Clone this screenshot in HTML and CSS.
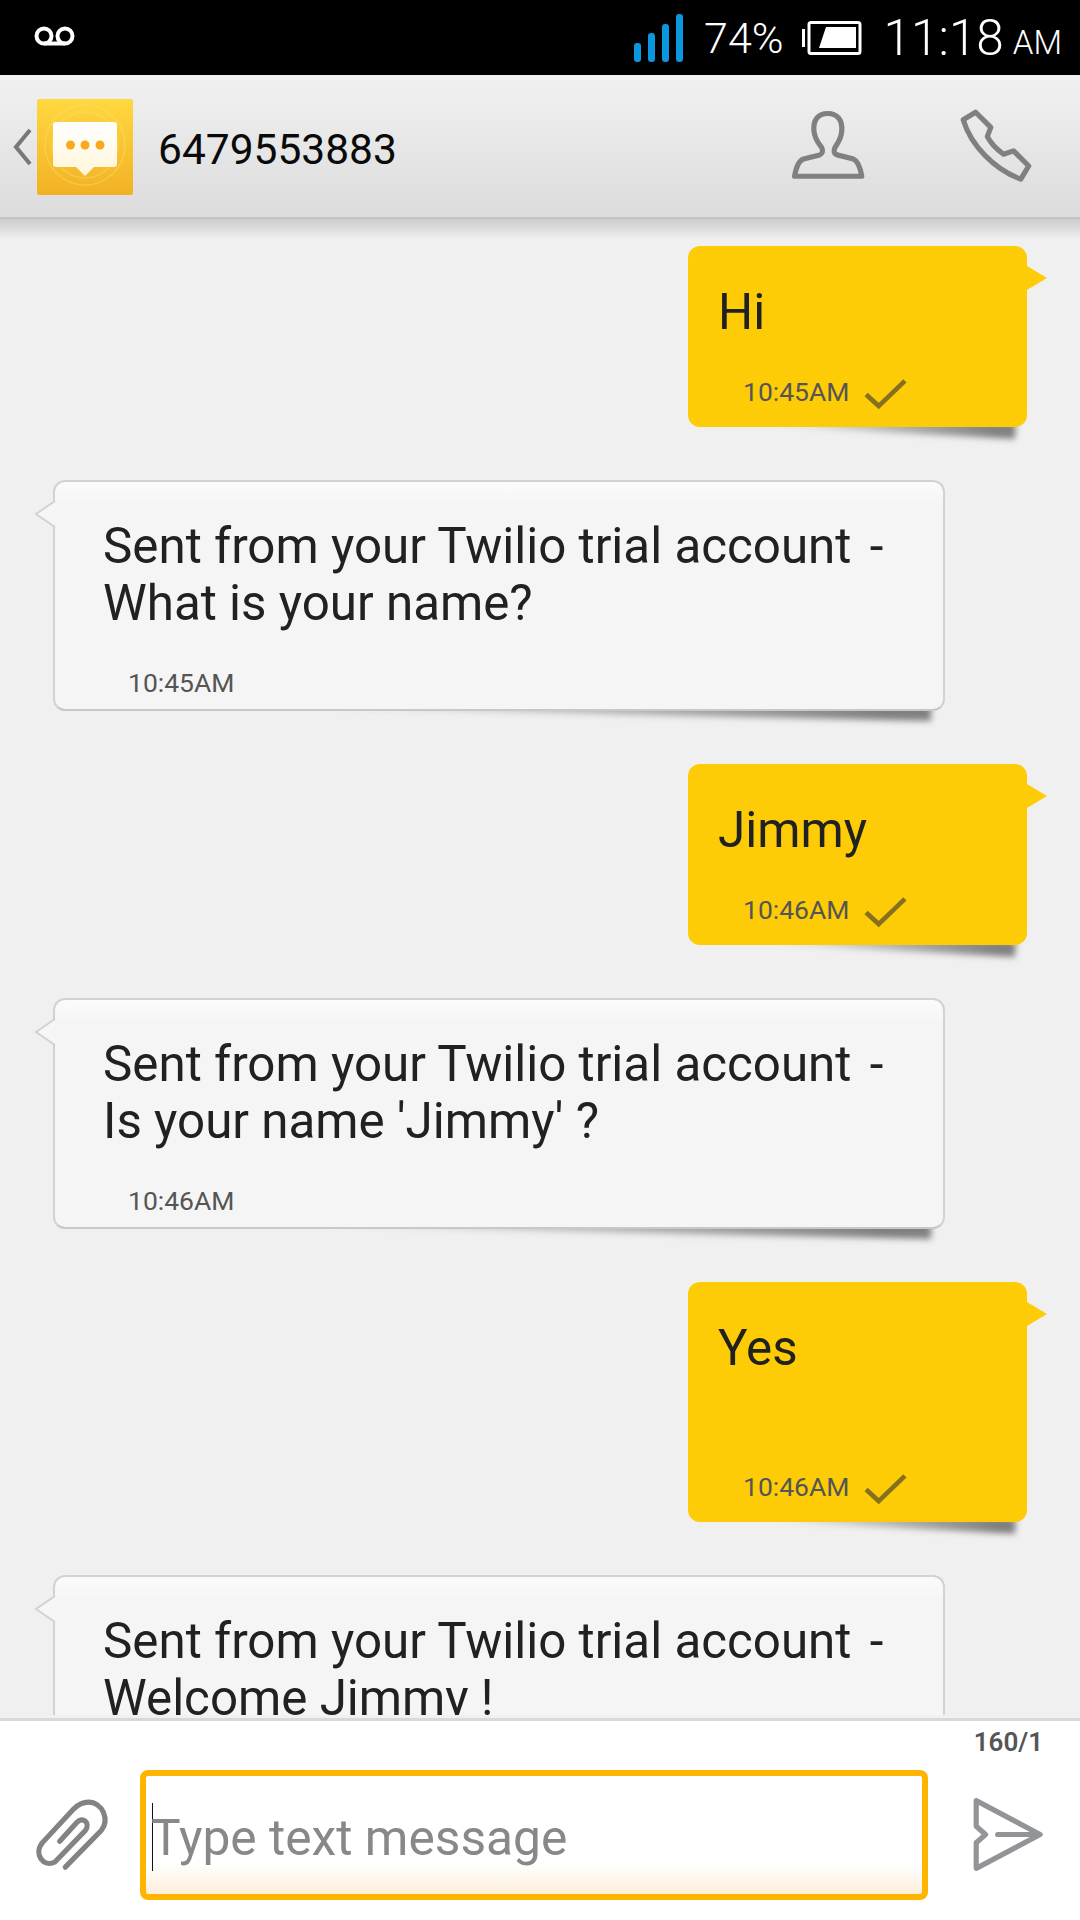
FILE: index.html
```html
<!DOCTYPE html>
<html lang="en">
<head>
<meta charset="utf-8">
<title>6479553883</title>
<link rel="stylesheet" href="styles.css">
</head>
<body>
<div class="phone">
  <div class="status">
    <svg class="vm" viewBox="0 0 41 20"><circle cx="10" cy="10" r="7.5"/><circle cx="31" cy="10" r="7.5"/><path d="M10 17.5h21"/></svg>
    <div class="status-right">
      <div class="signal"><i class="b1"></i><i class="b2"></i><i class="b3"></i><i class="b4"></i></div>
      <span class="pct">74%</span>
      <svg class="battery" viewBox="0 0 60 34"><rect class="nub" x="0" y="8" width="3" height="18"/><rect class="shell" x="7" y="1.5" width="51" height="31" rx="2"/><path class="level" d="M17 27 L24 6 H54 V27 Z"/></svg>
      <span class="clock">11:18</span><span class="ampm">AM</span>
    </div>
  </div>
  <header class="bar">
    <svg class="chev" viewBox="0 0 20 38"><path d="M17 2 L3 19 L17 36"/></svg>
    <svg class="logo" viewBox="0 0 96 96">
      <defs><linearGradient id="lg" x1="0" y1="0" x2="0" y2="1"><stop offset="0" stop-color="#ffd83f"/><stop offset="1" stop-color="#f2b125"/></linearGradient>
      <linearGradient id="lw" x1="0" y1="0" x2="0" y2="1"><stop offset="0" stop-color="#ffffff"/><stop offset="1" stop-color="#fff6d8"/></linearGradient></defs>
      <rect width="96" height="96" rx="2" fill="url(#lg)"/>
      <g class="rings"><circle cx="48" cy="46" r="40"/><circle cx="48" cy="46" r="33"/></g>
      <path d="M19 23h58a3 3 0 0 1 3 3v39a3 3 0 0 1-3 3H57l-9 9-9-9H19a3 3 0 0 1-3-3V26a3 3 0 0 1 3-3z" fill="url(#lw)"/>
      <circle class="dot" cx="33.500" cy="46" r="4.500"/><circle class="dot" cx="48" cy="46" r="4.500"/><circle class="dot" cx="63" cy="46" r="4.500"/>
    </svg>
    <h1 class="num">6479553883</h1>
    <svg class="person" viewBox="720 325 232 210"><path d="M835 341 C865 341 878 362 876 390 C875 415 862 430 856 440 C852 450 853 458 862 461 L910 473 C922 478 930 500 934 523 H739 C743 500 750 478 765 473 L812 461 C820 458 822 450 818 440 C810 430 797 415 795 390 C793 362 805 341 835 341 Z"/></svg>
    <svg class="call" viewBox="1210 325 230 230"><path d="M1228 365 L1264 343 L1308 387 L1298 413 C1308 435 1325 450 1345 465 L1374 455 L1418 499 L1395 537 C1320 510 1250 440 1228 365 Z"/></svg>
  </header>
  <main class="thread">
    <article class="msg out">
      <svg class="tail" viewBox="0 0 20 24"><path d="M0 0 L20 12 L0 24 Z"/></svg>
      <p class="text">Hi</p>
      <div class="meta"><span class="time">10:45AM</span><svg class="tick" viewBox="0 0 41 30"><path d="M2 16 L14 27 L39 3"/></svg></div>
    </article>
    <article class="msg in">
      <svg class="tail" viewBox="0 0 22 28"><path d="M21 1 L2 14 L21 27"/></svg>
      <p class="text">Sent from your Twilio trial account <span class="dash">-</span><br>What is your name?</p>
      <div class="meta"><span class="time">10:45AM</span></div>
    </article>
    <article class="msg out">
      <svg class="tail" viewBox="0 0 20 24"><path d="M0 0 L20 12 L0 24 Z"/></svg>
      <p class="text">Jimmy</p>
      <div class="meta"><span class="time">10:46AM</span><svg class="tick" viewBox="0 0 41 30"><path d="M2 16 L14 27 L39 3"/></svg></div>
    </article>
    <article class="msg in">
      <svg class="tail" viewBox="0 0 22 28"><path d="M21 1 L2 14 L21 27"/></svg>
      <p class="text">Sent from your Twilio trial account <span class="dash">-</span><br>Is your name 'Jimmy' ?</p>
      <div class="meta"><span class="time">10:46AM</span></div>
    </article>
    <article class="msg out tall">
      <svg class="tail" viewBox="0 0 20 24"><path d="M0 0 L20 12 L0 24 Z"/></svg>
      <p class="text">Yes</p>
      <div class="meta"><span class="time">10:46AM</span><svg class="tick" viewBox="0 0 41 30"><path d="M2 16 L14 27 L39 3"/></svg></div>
    </article>
    <article class="msg in">
      <svg class="tail" viewBox="0 0 22 28"><path d="M21 1 L2 14 L21 27"/></svg>
      <p class="text">Sent from your Twilio trial account <span class="dash">-</span><br>Welcome Jimmy !</p>
      <div class="meta"><span class="time">10:46AM</span></div>
    </article>
  </main>
  <footer class="composer">
    <div class="count">160/1</div>
    <div class="row">
      <svg class="clip" viewBox="95 350 225 220"><path d="M188 553 L292 447 C318 415 295 365 255 365 C238 365 225 372 212 385 L122 482 C95 515 125 555 158 538 L246 447 C262 425 238 405 222 423 L172 478"/></svg>
      <div class="field"><span class="caret"></span><span class="hint">Type text message</span></div>
      <svg class="send" viewBox="1250 355 220 225"><path d="M1268 368 L1453 466 L1268 564 V490 L1295 466 L1268 442 Z M1330 466 H1440"/></svg>
    </div>
  </footer>
</div>
</body>
</html>
```

FILE: styles.css
```css
* { box-sizing: border-box; }
html, body { margin: 0; padding: 0; }
body { width: 1080px; height: 1920px; overflow: hidden; font-family: Roboto, "Liberation Sans", sans-serif; }
.phone { width: 1080px; height: 1920px; display: flex; flex-direction: column; background: #f0f0f0; }

.status { flex: 0 0 75px; background: #000; color: #fff; display: flex; align-items: center; justify-content: space-between; padding: 0 18px 0 34px; }
.vm { width: 41px; height: 20px; margin-top: -4px; fill: none; stroke: #fff; stroke-width: 4; }
.status-right { display: flex; align-items: center; height: 75px; }
.signal { display: flex; align-items: flex-end; gap: 7px; height: 48px; margin-right: 21px; }
.signal i { display: block; width: 7px; border-radius: 3px; background: #0a97de; }
.signal .b1 { height: 19px; }
.signal .b2 { height: 29px; }
.signal .b3 { height: 38px; }
.signal .b4 { height: 48px; }
.pct { font-size: 43px; font-weight: 300; line-height: 75px; padding-top: 2px; margin-right: 18px; }
.battery { width: 60px; height: 34px; margin-right: 22px; }
.nub, .level { fill: #fff; }
.shell { fill: none; stroke: #fff; stroke-width: 3; }
.clock { font-size: 49.500px; font-weight: 300; line-height: 75px; padding-top: 2px; margin-right: 9px; }
.ampm { font-size: 33px; font-weight: 300; line-height: 75px; padding-top: 10px; }

.bar { flex: 0 0 144px; display: flex; align-items: center; position: relative; z-index: 2; padding-left: 13px; background: linear-gradient(#f1f1f1, #dcdcdc); border-bottom: 2px solid #c4c4c4; }
.chev { width: 20px; height: 38px; fill: none; stroke: #777; stroke-width: 4; margin-top: 1px; }
.logo { width: 96px; height: 96px; margin-left: 4px; margin-top: 2px; }
.rings { fill: none; stroke: #ffe27a; stroke-opacity: .35; stroke-width: 1.500; }
.dot { fill: #f9a91a; }
.num { font-size: 42.500px; font-weight: 400; color: #0a0a0a; margin: 8px 0 0 25px; line-height: 1; flex: 1; }
.person { width: 80px; height: 72.400px; stroke: #808080; fill: none; stroke-width: 15; stroke-linejoin: round; margin-right: 89px; margin-top: -4px; }
.call { width: 79.300px; height: 79.300px; stroke: #808080; fill: none; stroke-width: 15; stroke-linejoin: round; margin-right: 44px; }

.thread { flex: 1; min-height: 0; overflow: hidden; isolation: isolate; display: flex; flex-direction: column; gap: 53.500px; padding-top: 27px; background: linear-gradient(#cbcbcb, #f0f0f0) 0 0 / 100% 20px no-repeat #f0f0f0; }
.msg { position: relative; flex: none; display: flex; flex-direction: column; border-radius: 12px; }
.msg::after { content: ""; position: absolute; z-index: -1; right: 12px; bottom: -12px; height: 16px; width: 62%; transform-origin: right bottom; background: linear-gradient(to right, rgba(130,130,130,0), #808080 92%); filter: blur(3px); }
.text { margin: 0; font-size: 49.300px; line-height: 57px; color: #212121; }
.dash { margin-left: 6px; }
.meta { margin-top: auto; display: flex; align-items: center; }
.time { font-size: 26.500px; line-height: 30px; color: #555; }
.tail { position: absolute; }

.out { align-self: flex-end; width: 339px; height: 181px; margin-right: 53px; background: #fdcc07; padding: 38px 0 17px 30px; }
.out::after { width: 72%; transform: rotate(3deg); }
.in::after { width: 70%; transform: rotate(1.200deg); }
.out.tall { height: 240px; }
.out .tail { left: 100%; top: 20px; width: 20px; height: 24px; fill: #fdcc07; }
.out .meta { padding-left: 25px; }
.tick { width: 43px; height: 33px; margin-left: 15px; margin-top: 4px; fill: none; stroke: #84701f; stroke-width: 4.500; }

.in { align-self: flex-start; width: 892px; height: 231px; margin-left: 53px; margin-top: -1px; padding: 36px 0 11px 48px; background: linear-gradient(#fbfbfb, #f5f5f5 24px); border: 2px solid #d2d2d2; border-bottom-color: #c8c8c8; }
.in .tail { right: 100%; top: 18px; margin-right: -1px; width: 22px; height: 28px; fill: #f6f6f6; stroke: #d2d2d2; stroke-width: 2; }
.in .meta { padding-left: 25px; }

.composer { flex: 0 0 202px; position: relative; background: #fff; border-top: 3px solid #d9d9d9; z-index: 2; }
.composer::before { content: ""; position: absolute; left: 0; right: 0; top: -6px; height: 3px; background: #f1f1f1; }
.count { font-size: 26px; font-weight: 600; line-height: 30px; color: #555; text-align: right; padding: 6px 37px 0 0; height: 49px; }
.row { display: grid; grid-template-columns: 140px 788px 1fr; align-items: center; }
.clip { width: 78px; height: 76px; margin-left: 33px; fill: none; stroke: #838383; stroke-width: 15; stroke-linecap: round; }
.field { height: 130px; display: flex; align-items: center; padding-left: 6px; position: relative; border: 6px solid #fdb500; border-radius: 8px; background: linear-gradient(#fff 75%, #fdeed8); }
.caret { width: 1px; height: 68px; background: #111; margin-top: 4px; }
.hint { font-size: 49.700px; color: #888; margin-top: 6px; margin-left: -2px; }
.send { width: 76px; height: 78px; margin-left: 42px; fill: none; stroke: #939498; stroke-width: 15; stroke-linejoin: round; stroke-linecap: round; }
```
